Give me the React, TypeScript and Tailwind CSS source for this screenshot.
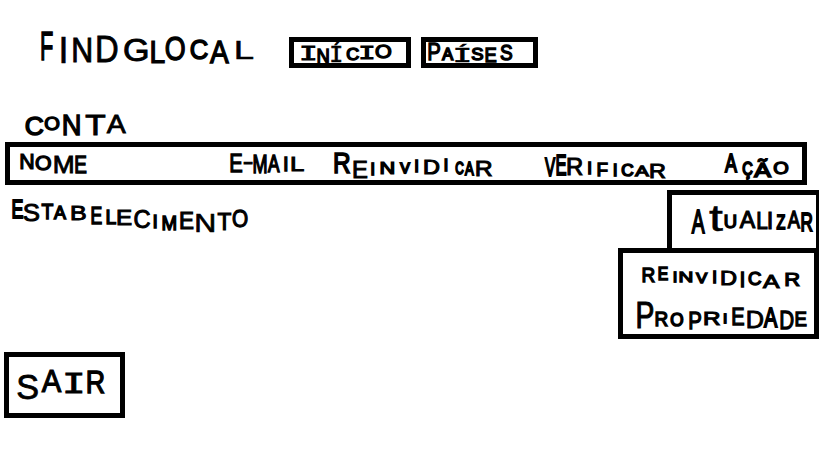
import React from "react";

// One hand-lettered character: glyph, left, top, right, bottom, and "slab" for a serifed I.
type Letter = [string, number, number, number, number, "slab"?];

const SANS = '"Liberation Sans", sans-serif';
const MONO = '"DejaVu Sans Mono", monospace';

const measurer = document.createElement("canvas").getContext("2d")!;

function inkOf(ch: string, family: string) {
  measurer.font = `200px ${family}`;
  const m = measurer.measureText(ch);
  return {
    left: -m.actualBoundingBoxLeft / 200,
    width: (m.actualBoundingBoxLeft + m.actualBoundingBoxRight) / 200,
    ascent: m.actualBoundingBoxAscent / 200,
    height: (m.actualBoundingBoxAscent + m.actualBoundingBoxDescent) / 200,
  };
}

// Fits the pen stroke of a glyph to the letter's own width and height.
function glyphStyle(ch: string, w: number, h: number, slab: boolean): React.CSSProperties {
  const family = slab ? MONO : SANS;
  const ink = inkOf(ch, family);
  if (ch === "-") {
    const size = 24;
    const sx = w / (ink.width * size);
    return {
      fontFamily: family,
      fontSize: size,
      lineHeight: `${size}px`,
      WebkitTextStroke: "0.9px black",
      transform: `translate(${-ink.left * size * sx}px, ${-(0.8465 - ink.ascent) * size}px) scaleX(${sx})`,
    };
  }
  const pen = h > 19 ? 4.1 : 3.4;
  const rough = h / ink.height;
  const narrow = ch === "I" && !slab;
  const squeeze = narrow ? 1 : w / (ink.width * rough);
  const heaviest = ch === "Í" ? 0.7 : 1.9;
  const stroke = Math.min(heaviest, Math.max(0.5, pen / Math.sqrt(squeeze) - rough * 0.092));
  const size = (h - stroke) / ink.height;
  const sx = narrow ? 1 : w / (ink.width * size + stroke);
  const x = narrow ? w / 2 - (ink.left + ink.width / 2) * size : (stroke / 2 - ink.left * size) * sx;
  const y = stroke / 2 - (0.8465 - ink.ascent) * size;
  return {
    fontFamily: family,
    fontSize: size,
    lineHeight: `${size}px`,
    WebkitTextStroke: `${stroke}px black`,
    transform: `translate(${x + 0.3}px, ${y + 0.2}px) scaleX(${sx})`,
  };
}

function Word({ letters, className = "" }: { letters: Letter[]; className?: string }) {
  const left = Math.floor(letters[0][1]);
  const top = Math.floor(Math.min(...letters.map((l) => l[2])));
  const bottom = Math.ceil(Math.max(...letters.map((l) => l[4])));
  return (
    <span
      className={`flex shrink-0 items-start whitespace-nowrap ${className}`}
      style={{ height: bottom - top }}
    >
      {letters.map(([ch, x1, y1, x2, y2, slab], i) => (
        <span
          key={i}
          className="block shrink-0"
          style={{
            width: x2 - x1,
            height: y2 - y1,
            marginLeft: x1 - (i ? letters[i - 1][3] : left),
            marginTop: y1 - top,
          }}
        >
          <span className="block w-max origin-top-left" style={glyphStyle(ch, x2 - x1, y2 - y1, !!slab)}>
            {ch}
          </span>
        </span>
      ))}
    </span>
  );
}

const brand: Letter[] = [
  ["F", 40.7, 31, 52.3, 61], ["I", 61, 36.7, 65.3, 63.3], ["N", 73, 36.7, 91, 62], ["D", 97, 37.3, 117.3, 63.3],
  ["G", 124, 39.3, 147.3, 62.7], ["L", 150.8, 40.7, 164.5, 63], ["O", 165.2, 37.3, 184.7, 62],
  ["C", 190.3, 40, 208, 60.7], ["A", 209, 40.7, 229, 63.3], ["L", 236, 41.3, 253, 60],
];
const inicio: Letter[] = [
  ["I", 300.7, 45.7, 314.7, 60.3, "slab"], ["N", 317.3, 47, 329, 63], ["Í", 331, 43, 341, 62.7, "slab"],
  ["C", 345.7, 47.7, 358.7, 61], ["I", 360, 46.3, 373.3, 59.7, "slab"], ["O", 374.7, 46.3, 391, 60.3],
];
const paises: Letter[] = [
  ["P", 428, 44.3, 440, 61.7], ["A", 440.7, 48.3, 453.3, 61], ["Í", 455.3, 43, 469.5, 62.3, "slab"],
  ["S", 471, 47.7, 483.3, 61], ["E", 484.7, 47, 496, 62.7], ["S", 500, 45, 512.3, 61.7],
];
const conta: Letter[] = [
  ["C", 24.7, 117.3, 43, 136.7], ["O", 44, 118, 59.3, 132], ["N", 63.3, 115.3, 80, 136.7],
  ["T", 85.3, 115, 105.5, 136], ["A", 106, 115, 126, 133.3],
];
const nome: Letter[] = [
  ["N", 20, 155, 33.3, 171], ["O", 34.7, 156.3, 50.7, 171.7], ["M", 54, 155.7, 72.7, 173.7], ["E", 75.3, 155.7, 86.7, 173.7],
];
const email: Letter[] = [
  ["E", 230, 154, 242, 173], ["-", 244, 162.3, 252, 165], ["M", 252.7, 155, 266, 173.7], ["A", 267.3, 156.3, 280, 174.3],
  ["I", 284, 156.3, 287, 171.7], ["L", 291.3, 157, 304, 171.7],
];
const reinvidicar: Letter[] = [
  ["R", 334, 152.7, 350, 174.3], ["E", 352.7, 161, 366.7, 179], ["I", 370.7, 163, 374, 175.7], ["N", 380, 163, 394, 175],
  ["V", 398.7, 162.3, 410, 174.3], ["I", 414.7, 161, 418, 174.3], ["D", 424, 160.3, 439.3, 175], ["I", 444, 159, 447.3, 171.7],
  ["C", 454.7, 161, 463.5, 175], ["A", 464, 161, 474, 176.3], ["R", 476, 161, 492, 177.7],
];
const verificar: Letter[] = [
  ["V", 544, 157.7, 555.3, 177], ["E", 555.8, 154, 566, 175.7], ["R", 567.3, 159, 582.7, 176.3], ["I", 587.7, 163, 591, 176.3],
  ["F", 597.3, 162.3, 608, 177], ["I", 613.3, 163.7, 616.7, 176.3], ["C", 620.7, 164.3, 633.3, 177],
  ["A", 634, 165, 649.3, 177], ["R", 650, 163, 665.3, 178.3],
];
const acao: Letter[] = [
  ["A", 724, 154.3, 737.3, 173.7], ["Ç", 742, 161.7, 752.7, 180.3], ["Ã", 753.3, 157.7, 772, 177.2], ["O", 772.7, 163, 788, 176.3],
];
const estabelecimento: Letter[] = [
  ["E", 11.7, 200, 22.7, 219.7], ["S", 23.3, 203.7, 39.3, 221.7], ["T", 40.7, 204, 53, 220.3], ["A", 53.3, 205.7, 66.7, 220.3],
  ["B", 70.7, 205.7, 85.3, 221], ["E", 91.3, 208.3, 102, 225.7], ["L", 106, 210.3, 116, 225], ["E", 117, 209, 131.3, 225.7],
  ["C", 134, 211, 150, 229.7], ["I", 153.3, 214.3, 156.7, 229], ["M", 162, 215, 176, 230.3], ["E", 180, 213, 193.3, 230.3],
  ["N", 196, 213.7, 214, 231.7], ["T", 217.3, 213.7, 231.3, 231], ["O", 232, 210.3, 247.3, 229],
];
const atualizar: Letter[] = [
  ["A", 690.7, 208.7, 704.7, 234], ["t", 709.3, 206.7, 723, 232], ["U", 724, 216, 736, 230], ["A", 738.7, 212, 755.3, 229.3],
  ["L", 756.7, 213.3, 767, 230.7], ["I", 768, 213.3, 771.5, 230.7], ["Z", 776, 214.7, 785.3, 230],
  ["A", 786.7, 210.7, 800, 229.3], ["R", 800.7, 212.7, 812.3, 232],
];
const claim: Letter[] = [
  ["R", 642, 267.3, 654.7, 283.3], ["E", 658, 268, 668, 282], ["I", 673, 270.7, 676.5, 282.7], ["N", 678.7, 271.3, 692, 283.3],
  ["V", 694.7, 271.3, 707.3, 283.3], ["I", 712.7, 272, 716, 285.3], ["D", 720.7, 270, 736, 285.3], ["I", 740.7, 273.3, 744, 289.3],
  ["C", 748, 272, 761.3, 286.7], ["A", 762, 274.7, 780, 288.7], ["R", 785.3, 272.7, 800, 286.7],
];
const property: Letter[] = [
  ["P", 637.3, 303.3, 653.3, 329.3], ["R", 655.3, 311.3, 668, 327.3], ["O", 670, 314, 683.3, 328], ["P", 688.7, 313.3, 700.7, 330.7],
  ["R", 704, 312, 720, 326], ["I", 723.3, 312.7, 726.7, 324], ["E", 732, 309.3, 744, 326.7], ["D", 746.7, 310.7, 762.7, 328.7],
  ["A", 763.3, 308, 778, 328.7], ["D", 780, 311.3, 793.3, 330], ["E", 795.3, 310, 806.7, 326],
];
const sair: Letter[] = [
  ["S", 16.7, 372.7, 37.3, 398.7], ["A", 41.3, 370, 62, 393.3], ["I", 65.3, 372.7, 82.5, 393.3, "slab"], ["R", 86.7, 372, 104, 394.7],
];

export default function App() {
  return (
    <div className="flex h-[459px] w-[819px] flex-col items-start overflow-hidden bg-white text-black">
      <header className="flex h-[115px] shrink-0 items-start">
        <h1 className="w-[249px] pt-[31px] pl-10">
          <Word letters={brand} />
        </h1>
        <nav className="ml-10 flex gap-2.5 pt-[37px]">
          <button className="flex h-[31px] w-[122px] items-start border-5 border-black pt-px pl-1.5">
            <Word letters={inicio} />
          </button>
          <button className="flex h-[31px] w-[117px] items-start border-5 border-black pt-px pl-0.5">
            <Word letters={paises} />
          </button>
        </nav>
      </header>
      <h2 className="h-[27px] shrink-0 pl-6">
        <Word letters={conta} />
      </h2>
      <div className="ml-[5px] grid h-[43px] w-[802px] shrink-0 grid-cols-[210px_104px_210px_180px_1fr] items-start border-5 border-black pl-2.5">
        <Word letters={nome} className="mt-2" />
        <Word letters={email} className="mt-[7px]" />
        <Word letters={reinvidicar} className="mt-[5px]" />
        <Word letters={verificar} className="mt-[7px]" />
        <Word letters={acao} className="mt-[7px]" />
      </div>
      <main className="mt-[5px] flex h-[149px] shrink-0 items-start">
        <div className="w-[618px] pt-2.5 pl-[11px]">
          <Word letters={estabelecimento} />
        </div>
        <div className="flex w-[203px] flex-col items-end">
          <button className="flex h-[58px] w-[154px] items-start border-5 border-b-0 border-black pt-[11px] pl-[18px]">
            <Word letters={atualizar} />
          </button>
          <button className="mr-0.5 flex h-[91px] w-[201px] flex-col items-start border-5 border-black pt-[14px] pl-3.5">
            <Word letters={claim} className="ml-[5px]" />
            <Word letters={property} className="mt-[13px]" />
          </button>
        </div>
      </main>
      <button className="mt-[13px] ml-1 flex h-[66px] w-[121px] shrink-0 items-start border-5 border-black pt-[13px] pl-[7px]">
        <Word letters={sair} />
      </button>
    </div>
  );
}
